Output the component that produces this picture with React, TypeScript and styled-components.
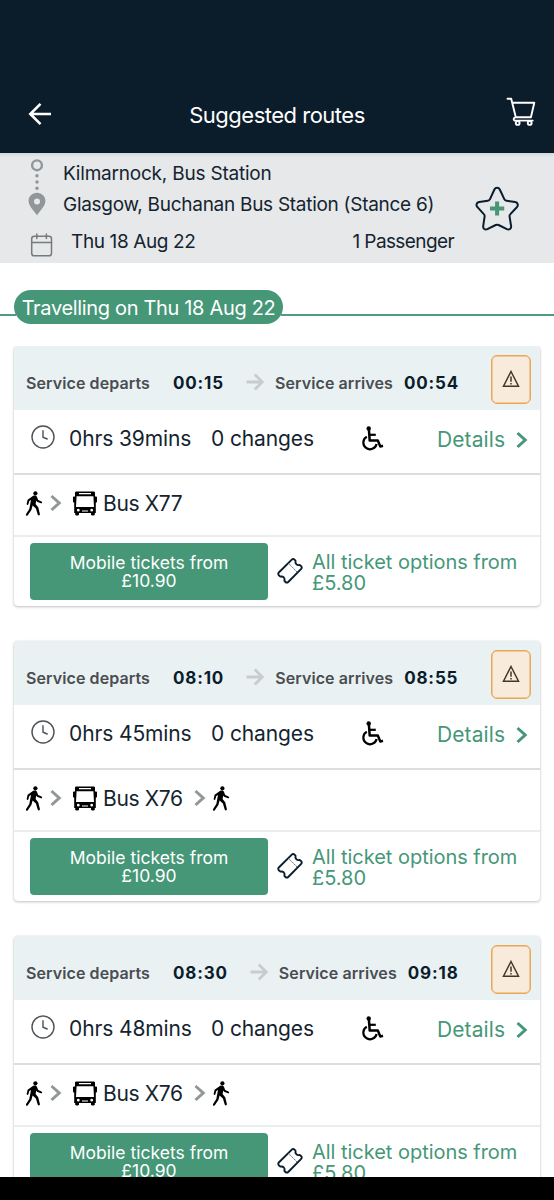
import styled, { createGlobalStyle } from "styled-components";

const GREEN = "#459778";
const NAVY = "#0b1d2b";

const GlobalStyle = createGlobalStyle`
  * { box-sizing: border-box; }
  body { margin: 0; background: #fff; }
  svg { display: block; flex: none; }
`;

const Screen = styled.div`
  display: flex;
  flex-direction: column;
  height: 1200px;
  overflow: hidden;
  background: #fff;
  color: #14242f;
  font-family: Inter, "Liberation Sans", sans-serif;
  font-weight: 400;
  white-space: nowrap;
`;

const TopBar = styled.header`
  flex: none;
  display: grid;
  grid-template-columns: 60px 1fr 60px;
  align-items: center;
  height: 153px;
  padding: 77px 0 0;
  background: ${NAVY};
  color: #fff;
`;

const BackButton = styled.div`
  padding: 0 0 2px 28px;
`;

const Title = styled.h1`
  margin: 0;
  text-align: center;
  font-size: 22px;
  font-weight: 400;
  letter-spacing: -0.5px;
`;

const CartButton = styled.div`
  padding: 0 0 6px 12px;
`;

const Summary = styled.section`
  flex: none;
  display: grid;
  grid-template-columns: 63px 391px 1fr;
  height: 110px;
  padding-top: 4px;
  background: linear-gradient(#d4d6d8, #e6e8ea 4px);
  font-size: 19px;
`;

const SummaryIcons = styled.div`
  display: flex;
  flex-direction: column;
  gap: 16px;
  padding: 1px 0 0 27px;
`;

const SummaryText = styled.div`
  display: grid;
  grid-template-rows: 31px 31px 43px;
  align-items: center;
  padding-top: 1px;
`;

const Place = styled.div<{ $tracking: number }>`
  letter-spacing: ${(p) => p.$tracking}px;
`;

const TripMeta = styled.div`
  display: flex;
  justify-content: space-between;
  padding-left: 8px;
  letter-spacing: -0.38px;
`;

const Passengers = styled.span`
  letter-spacing: -0.6px;
`;

const Favourite = styled.div`
  padding: 29px 0 0 20px;
`;

const DateStrip = styled.div`
  flex: none;
  display: flex;
  align-items: center;
  height: 83px;
  padding-bottom: 2px;
  padding-top: 6px;
`;

const Rule = styled.div<{ $width?: number }>`
  flex: ${(p) => (p.$width ? `0 0 ${p.$width}px` : "1")};
  height: 2px;
  margin: 17px -2px 0;
  background: #4f9d80;
`;

const DatePill = styled.div`
  width: 269px;
  height: 34px;
  border-radius: 17px;
  background: ${GREEN};
  color: #fff;
  text-align: center;
  font-size: 20px;
  line-height: 36px;
  letter-spacing: -0.33px;
`;

const Routes = styled.main`
  flex: 1;
  min-height: 0;
  overflow: hidden;
  display: flex;
  flex-direction: column;
  gap: 35px;
  padding: 0 14px;
`;

const Card = styled.article`
  flex: none;
  height: 260px;
  border-radius: 4px;
  background: #fff;
  box-shadow: 0 1px 3px rgba(0, 0, 0, 0.24), 0 0 1px rgba(0, 0, 0, 0.16);
`;

const CardHeader = styled.div`
  display: flex;
  align-items: center;
  height: 64px;
  padding: 0 9px 0 12px;
  border-radius: 4px 4px 0 0;
  background: #e9f1f3;
`;

const Times = styled.div`
  flex: 1;
  display: flex;
  align-items: center;
  padding-top: 9px;
`;

const TimeLabel = styled.span`
  color: #4a4d50;
  font-size: 16px;
  font-weight: 600;
  letter-spacing: 0.09px;
`;

const Time = styled.strong<{ $gap: number }>`
  margin-left: ${(p) => p.$gap}px;
  color: ${NAVY};
  font-size: 17px;
  font-weight: 700;
  letter-spacing: 0.85px;
`;

const ArrowSlot = styled.span`
  margin: -2px 11px 0 22px;
`;

const Warning = styled.div`
  display: grid;
  place-items: center;
  width: 40px;
  height: 49px;
  margin-top: 2px;
  border: 1px solid #e9a754;
  box-shadow: inset 0 0 0 0.5px #e9a754;
  border-radius: 6px;
  background: #f9ebdc;
`;

const InfoRow = styled.div`
  display: grid;
  grid-template-columns: 55px 142px 150px 76px 1fr;
  align-items: center;
  height: 65px;
  padding: 0 0 7px;
  border-bottom: 2px solid #dcdddd;
  font-size: 21px;
`;

const ClockSlot = styled.div`
  padding: 0 0 2px 17px;
`;

const Duration = styled.span`
  letter-spacing: -0.12px;
`;

const Details = styled.a`
  display: flex;
  align-items: center;
  justify-content: space-between;
  padding: 3px 12px 0 0;
  color: ${GREEN};
  letter-spacing: 0.1px;
`;

const Legs = styled.div`
  display: flex;
  align-items: center;
  height: 62px;
  padding: 0 0 4px 12px;
  border-bottom: 2px solid #ebecec;
  font-size: 21px;
`;

const LegName = styled.span`
  width: 91px;
  margin-left: 6px;
  letter-spacing: -0.35px;
`;

const LegSlot = styled.span<{ $width: number }>`
  width: ${(p) => p.$width}px;
`;

const Tickets = styled.div`
  display: flex;
  height: 69px;
  padding: 6px 0 0 16px;
`;

const MobileButton = styled.button`
  width: 238px;
  height: 57px;
  padding: 1px 0 0;
  border: 0;
  border-radius: 4px;
  background: ${GREEN};
  color: #fff;
  font: inherit;
  font-size: 17.5px;
  line-height: 18.5px;
  letter-spacing: 0.02px;
`;

const TicketSlot = styled.div`
  width: 44px;
  padding: 14px 0 0 8px;
`;

const AllOptions = styled.a`
  padding-top: 9px;
  color: ${GREEN};
  font-size: 20px;
  line-height: 21px;
  letter-spacing: -0.03px;
`;

const BottomBar = styled.div`
  flex: none;
  height: 23px;
  background: #000;
`;

const BackIcon = () => (
  <svg width="24" height="24" viewBox="0 0 24 24" fill="none" stroke="#fff" strokeWidth="2.6">
    <path d="M23 12H2.5M12.5 1.8 2.3 12l10.2 10.2" />
  </svg>
);

const CartIcon = () => (
  <svg width="30" height="30" viewBox="0 0 30 30" fill="none" stroke="#fff" strokeWidth="1.9" strokeLinecap="round" strokeLinejoin="round">
    <path d="M1.5 1.8h3.7l4.6 18.4h15.1M6.3 5.8h22l-3.4 14.4M9.8 20.2c-2.4 0-3 3.4-.3 3.4h17.2" />
    <circle cx="11.7" cy="26" r="1.9" />
    <circle cx="23.7" cy="26" r="1.9" />
  </svg>
);

const RouteIcon = () => (
  <svg width="20" height="59" viewBox="0 0 20 59" fill="#919698">
    <circle cx="10" cy="7.3" r="4.9" fill="none" stroke="#919698" strokeWidth="2.4" />
    <circle cx="10" cy="17.7" r="1.7" />
    <circle cx="10" cy="24" r="1.7" />
    <circle cx="10" cy="30.2" r="1.7" />
    <path fillRule="evenodd" d="M10 34.8c-4.8 0-8.4 3.6-8.4 8.2 0 5.2 5.3 9.4 8.4 14.2 3.1-4.8 8.4-9 8.4-14.2 0-4.6-3.6-8.2-8.4-8.2Zm0 5.7a3 3 0 1 1 0 6 3 3 0 0 1 0-6Z" />
  </svg>
);

const CalendarIcon = () => (
  <svg width="28" height="25" viewBox="0 0 28 25" fill="none" stroke="#777b7e" strokeWidth="1.5" strokeLinecap="round">
    <rect x="4.7" y="3.2" width="19.8" height="19.6" rx="2.5" />
    <path d="M4.7 9.5h19.8M9.8 1v4.5M19.4 1v4.5" />
  </svg>
);

const StarIcon = () => (
  <svg width="46" height="46" viewBox="0 0 46 46">
    <path
      d="M20.4 3.5c1.2-2.5 4.2-2.5 5.4 0l4.5 9.7c.4.9 1.2 1.5 2.2 1.6l8.600 1.300c2.700.4 3.600 3.200 1.700 5.100l-6.400 6.900c-.7.7-1 1.600-.8 2.500l1.500 9.600c.4 2.500-1.900 4.100-4.200 3l-8.300-4.200c-.9-.4-2-.4-2.900 0l-8.300 4.200c-2.300 1.100-4.600-.5-4.200-3l1.400-9.600c.2-.9-.1-1.800-.8-2.500l-6.300-6.900c-1.900-1.900-1-4.700 1.700-5.100l8.600-1.300c1-.1 1.800-.7 2.200-1.600z"
      fill="none"
      stroke={NAVY}
      strokeWidth="2"
    />
    <path d="M23.1 15.5v14M16 22.500h14.200" stroke={GREEN} strokeWidth="4" />
  </svg>
);

const ArrowIcon = () => (
  <svg width="18" height="18" viewBox="0 0 18 18" fill="none" stroke="#c9cccd" strokeWidth="2.8">
    <path d="M.5 9h15.300M8.800 1.500 16.300 9l-7.500 7.500" />
  </svg>
);

const WarningIcon = () => (
  <svg width="18" height="18" viewBox="0 0 18 18" fill="none" stroke="#45362a" strokeWidth="1.500">
    <path d="M9 1.500 16.500 16.200h-15z" />
    <path d="M9 6.500v5.300M9 13v1.600" />
  </svg>
);

const ClockIcon = () => (
  <svg width="24" height="24" viewBox="0 0 24 24" fill="none" stroke="#4d5256" strokeWidth="1.400" strokeLinecap="round">
    <circle cx="12" cy="12" r="11" />
    <path d="M12 5.800v6.400l4.200 1.800" />
  </svg>
);

const WheelchairIcon = () => (
  <svg width="23" height="25" viewBox="0 0 23 25" fill="none" stroke="#000" strokeWidth="2.200">
    <circle cx="7.700" cy="2.400" r="2.200" fill="#000" stroke="none" />
    <path d="M7.900 3.500 8.700 14.600h8.100l2.500 6 2.700-.8" strokeWidth="2.500" strokeLinejoin="round" />
    <path d="M8.600 8.800h6.200" />
    <path d="M5.800 10.700a6.700 6.700 0 1 0 9.800 7.300" />
  </svg>
);

const Chevron = ({ color }: { color: string }) => (
  <svg width="12" height="18" viewBox="0 0 12 18" fill="none" stroke={color} strokeWidth="3">
    <path d="m1.500 2 7.700 7-7.700 7" />
  </svg>
);

const WalkIcon = () => (
  <svg width="17" height="25" viewBox="0 0 17 25" fill="#000">
    <circle cx="9.400" cy="2.300" r="2.100" />
    <path d="M7.200 4.800c1.700-.5 3.300-.1 3.800 1.200l1.200 3 3.300 1.500c1.200.6.600 2.200-.6 1.800l-3.800-1.500-.8-1.300-.7 3.500 2.600 3.300 1.700 6.700c.3 1.500-1.700 2-2.200.6l-1.800-6-3.300-3.200-1.200 4.600-3.600 5.200c-.9 1.200-2.500.1-1.700-1.200l3.200-5 1.700-8.900-1.700.9-.9 3.300c-.4 1.100-1.900.7-1.700-.5l.9-4z" />
  </svg>
);

const BusIcon = () => (
  <svg width="24" height="25" viewBox="0 0 24 25">
    <path
      fillRule="evenodd"
      d="M3.500.5h17c1 0 1.500.5 1.500 1.500v3.500h1.200c.5 0 .8.300.8.800v4.500c0 .5-.3.800-.8.800h-.4V22h-1v1.500c0 1.300-3.800 1.300-3.800 0V22H6v1.500c0 1.300-3.800 1.300-3.800 0V22h-1V11.600H.8c-.5 0-.8-.3-.8-.8V6.300c0-.5.300-.8.800-.8H2V2C2 1 2.500.5 3.500.5ZM6 2v1.300h12V2ZM3.600 5.200 3 16h18l-.6-10.800ZM5.300 17.800a1.400 1.400 0 1 0 0 2.800 1.400 1.400 0 0 0 0-2.800Zm13.400 0a1.400 1.400 0 1 0 0 2.800 1.400 1.400 0 0 0 0-2.800ZM9 19.400v1h6v-1Z"
    />
  </svg>
);

const TicketIcon = () => (
  <svg width="28" height="28" viewBox="0 0 28 28" fill="none" stroke={NAVY} strokeWidth="1.900" strokeLinejoin="round">
    <path d="M15.800 2.600a1.900 1.900 0 0 1 2.700 0l1.100 1.200c-.9 2.600 1.400 5 4.100 4.100l1.500 1.300a1.900 1.900 0 0 1 0 2.700L12.200 25a1.900 1.900 0 0 1-2.700 0l-1.100-1.200c.9-2.700-1.300-5-4-4.200l-1.600-1.400a1.900 1.900 0 0 1 0-2.700z" />
    <path d="m12.500 6.300 8.600 8.700" strokeWidth="1" stroke="#5d6870" strokeDasharray="2 .7" />
  </svg>
);

type Route = { departs: string; arrives: string; duration: string; bus: string; walkAfter: boolean };

const ROUTES: Route[] = [
  { departs: "00:15", arrives: "00:54", duration: "0hrs 39mins", bus: "Bus X77", walkAfter: false },
  { departs: "08:10", arrives: "08:55", duration: "0hrs 45mins", bus: "Bus X76", walkAfter: true },
  { departs: "08:30", arrives: "09:18", duration: "0hrs 48mins", bus: "Bus X76", walkAfter: true },
];

const RouteCard = ({ route }: { route: Route }) => (
  <Card>
    <CardHeader>
      <Times>
        <TimeLabel>Service departs</TimeLabel>
        <Time $gap={23}>{route.departs}</Time>
        <ArrowSlot>
          <ArrowIcon />
        </ArrowSlot>
        <TimeLabel>Service arrives</TimeLabel>
        <Time $gap={11}>{route.arrives}</Time>
      </Times>
      <Warning>
        <WarningIcon />
      </Warning>
    </CardHeader>
    <InfoRow>
      <ClockSlot>
        <ClockIcon />
      </ClockSlot>
      <Duration>{route.duration}</Duration>
      <Duration>0 changes</Duration>
      <WheelchairIcon />
      <Details>
        Details
        <Chevron color={GREEN} />
      </Details>
    </InfoRow>
    <Legs>
      <LegSlot $width={24}>
        <WalkIcon />
      </LegSlot>
      <LegSlot $width={23}>
        <Chevron color="#919697" />
      </LegSlot>
      <BusIcon />
      <LegName>{route.bus}</LegName>
      {route.walkAfter && (
        <>
          <LegSlot $width={19}>
            <Chevron color="#919697" />
          </LegSlot>
          <WalkIcon />
        </>
      )}
    </Legs>
    <Tickets>
      <MobileButton>
        Mobile tickets from
        <br />
        £10.90
      </MobileButton>
      <TicketSlot>
        <TicketIcon />
      </TicketSlot>
      <AllOptions>
        All ticket options from
        <br />
        £5.80
      </AllOptions>
    </Tickets>
  </Card>
);

export default function App() {
  return (
    <Screen>
      <GlobalStyle />
      <TopBar>
        <BackButton>
          <BackIcon />
        </BackButton>
        <Title>Suggested routes</Title>
        <CartButton>
          <CartIcon />
        </CartButton>
      </TopBar>
      <Summary>
        <SummaryIcons>
          <RouteIcon />
          <CalendarIcon />
        </SummaryIcons>
        <SummaryText>
          <Place $tracking={-0.21}>Kilmarnock, Bus Station</Place>
          <Place $tracking={-0.28}>Glasgow, Buchanan Bus Station (Stance 6)</Place>
          <TripMeta>
            <span>Thu 18 Aug 22</span>
            <Passengers>1 Passenger</Passengers>
          </TripMeta>
        </SummaryText>
        <Favourite>
          <StarIcon />
        </Favourite>
      </Summary>
      <DateStrip>
        <Rule $width={18} />
        <DatePill>Travelling on Thu 18 Aug 22</DatePill>
        <Rule />
      </DateStrip>
      <Routes>
        {ROUTES.map((route) => (
          <RouteCard key={route.departs} route={route} />
        ))}
      </Routes>
      <BottomBar />
    </Screen>
  );
}
